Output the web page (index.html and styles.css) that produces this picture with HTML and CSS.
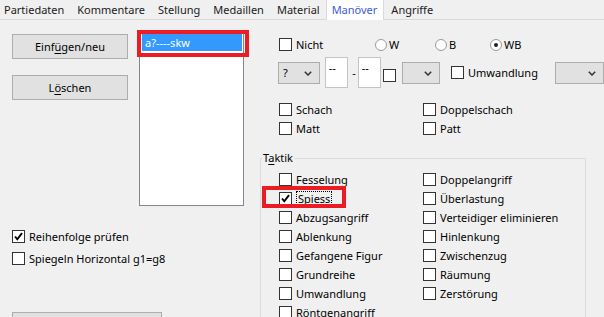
FILE: index.html
```html
<!DOCTYPE html>
<html lang="de">
<head>
    <meta charset="UTF-8">
    <title>Manöver</title>
    <link rel="stylesheet" href="styles.css">
</head>
<body>
    <!-- Tab strip -->
    <div class="tabs">
        <span class="tab first">Partiedaten</span>
        <span class="tab">Kommentare</span>
        <span class="tab">Stellung</span>
        <span class="tab">Medaillen</span>
        <span class="tab">Material</span>
        <span class="tab active">Manöver</span>
        <span class="tab">Angriffe</span>
    </div>

    <div class="page">
        <!-- Left side: buttons, list, options -->
        <div class="left">
            <div class="top">
                <div class="buttons">
                    <button class="btn">Einf<u>ü</u>gen/neu</button>
                    <button class="btn">L<u>ö</u>schen</button>
                </div>
                <div class="list">
                    <div class="item">a?----skw</div>
                    <div class="mark list-mark"></div>
                </div>
            </div>

            <div class="options">
                <label class="check"><span class="box"><svg viewBox="0 0 11 11"><polyline points="2,5.5 4.3,8.3 9,2.2"/></svg></span>Reihenfolge prüfen</label>
                <label class="check"><span class="box"></span>Spiegeln Horizontal g1=g8</label>
            </div>

            <button class="btn wide"></button>
        </div>

        <!-- Right side: filter controls and tactics -->
        <div class="right">
            <div class="row1">
                <label class="check nicht"><span class="box"></span>Nicht</label>
                <label class="radio w"><span class="dot"></span>W</label>
                <label class="radio b"><span class="dot"></span>B</label>
                <label class="radio"><span class="dot on"></span>WB</label>
            </div>

            <div class="row2">
                <div class="combo q">?<svg class="chev" viewBox="0 0 8 5"><polyline points="0.8,0.8 4,4 7.2,0.8"/></svg></div>
                <div class="field">--</div>
                <span class="dash">-</span>
                <div class="field">--</div>
                <span class="box small"></span>
                <div class="combo e"><svg class="chev" viewBox="0 0 8 5"><polyline points="0.8,0.8 4,4 7.2,0.8"/></svg></div>
                <label class="check umw"><span class="box"></span>Umwandlung</label>
                <div class="combo last"><svg class="chev" viewBox="0 0 8 5"><polyline points="0.8,0.8 4,4 7.2,0.8"/></svg></div>
            </div>

            <div class="flags">
                <label class="check"><span class="box"></span>Schach</label>
                <label class="check"><span class="box"></span>Doppelschach</label>
                <label class="check"><span class="box"></span>Matt</label>
                <label class="check"><span class="box"></span>Patt</label>
            </div>

            <fieldset class="group">
                <legend>T<u>a</u>ktik</legend>
                <div class="tactics">
                    <label class="check"><span class="box"></span>Fesselung</label>
                    <label class="check"><span class="box"></span>Doppelangriff</label>
                    <label class="check spiess"><span class="box"><svg viewBox="0 0 11 11"><polyline points="2,5.5 4.3,8.3 9,2.2"/></svg></span><span class="focus">Spiess</span><span class="mark spiess-mark"></span></label>
                    <label class="check"><span class="box"></span>Überlastung</label>
                    <label class="check"><span class="box"></span>Abzugsangriff</label>
                    <label class="check"><span class="box"></span>Verteidiger eliminieren</label>
                    <label class="check"><span class="box"></span>Ablenkung</label>
                    <label class="check"><span class="box"></span>Hinlenkung</label>
                    <label class="check"><span class="box"></span>Gefangene Figur</label>
                    <label class="check"><span class="box"></span>Zwischenzug</label>
                    <label class="check"><span class="box"></span>Grundreihe</label>
                    <label class="check"><span class="box"></span>Räumung</label>
                    <label class="check"><span class="box"></span>Umwandlung</label>
                    <label class="check"><span class="box"></span>Zerstörung</label>
                    <label class="check"><span class="box"></span>Röntgenangriff</label>
                </div>
            </fieldset>
        </div>
    </div>
</body>
</html>
```

FILE: styles.css
```css
/* General Reset */
* {
    box-sizing: border-box;
    margin: 0;
    padding: 0;
}
html, body {
    overflow: hidden;
}
body {
    width: 604px;
    height: 317px;
    background: #f0f0f0;
    color: #000;
    font-family: "Noto Sans", "Liberation Sans", sans-serif;
    font-size: 11px;
}
u {
    text-decoration-thickness: 1px;
    text-underline-offset: 2px;
}

/* Tab strip */
.tabs {
    display: flex;
    height: 20px;
    border-bottom: 1px solid #dadada;
}
.tab {
    padding: 0 6px 0 7px;
    line-height: 19px;
    color: #1a1a1a;
}
.tab.first {
    padding-left: 4px;
}
.tab.active {
    height: 20px;
    padding: 0 6px 0 5px;
    background: #fff;
    border-left: 1px solid #dadada;
    border-right: 1px solid #dadada;
    color: #3c5cd8;
}

/* Page layout */
.page {
    display: flex;
}
.left {
    width: 260px;
    display: flex;
    flex-direction: column;
}
.right {
    width: 344px;
    padding-top: 18px;
}

/* Buttons */
.btn {
    height: 25px;
    width: 116px;
    background: #e1e1e1;
    border: 1px solid #adadad;
    font-family: inherit;
    font-size: 11px;
    color: #000;
}
.top {
    display: flex;
    align-items: flex-start;
}
.buttons {
    display: flex;
    flex-direction: column;
    gap: 16px;
    margin: 14px 0 0 12px;
}
.btn.wide {
    width: 150px;
    margin: 47px 0 0 12px;
}

/* List box */
.list {
    position: relative;
    width: 105px;
    height: 174px;
    margin: 12px 0 0 11px;
    padding: 1px;
    background: #fff;
    border: 1px solid #828790;
}
.item {
    height: 17px;
    margin-left: 1px;
    padding-left: 3px;
    line-height: 17px;
    background: #3399ff;
    color: #fff;
}

/* Red annotation frames */
.mark {
    position: absolute;
    border: 4px solid #ec1c24;
}
.list-mark {
    left: -3px;
    top: -3px;
    width: 112px;
    height: 27px;
}
.spiess-mark {
    left: -17px;
    top: -3px;
    width: 84px;
    height: 22px;
}

/* Checkboxes and radios */
.check {
    display: flex;
    align-items: center;
    height: 13px;
    white-space: nowrap;
}
.box {
    flex: none;
    width: 13px;
    height: 13px;
    margin-right: 4px;
    background: #fff;
    border: 1px solid #333;
}
.box svg {
    display: block;
    width: 11px;
    height: 11px;
    fill: none;
    stroke: #000;
    stroke-width: 1.9;
}
.radio {
    display: flex;
    align-items: center;
    height: 13px;
}
.dot {
    width: 12px;
    height: 12px;
    margin-right: 2px;
    border: 1px solid #9a9a9a;
    border-radius: 50%;
    background: #fff;
    display: flex;
    align-items: center;
    justify-content: center;
}
.dot.on::after {
    content: "";
    width: 4px;
    height: 4px;
    border-radius: 50%;
    background: #222;
}

.options {
    display: flex;
    flex-direction: column;
    gap: 9px;
    margin-top: 24px;
    padding-left: 12px;
}

/* Row 1 */
.row1 {
    display: flex;
    padding-left: 19px;
}
.nicht { width: 96px; }
.radio.w { width: 60px; }
.radio.b { width: 55px; }

/* Row 2 */
.row2 {
    display: flex;
    align-items: center;
    height: 31px;
    margin-top: 6px;
    padding-left: 18px;
}
.combo {
    position: relative;
    height: 22px;
    padding-left: 4px;
    line-height: 20px;
    background: #e1e1e1;
    border: 1px solid #adadad;
}
.chev {
    position: absolute;
    right: 7px;
    top: 8px;
    width: 8px;
    height: 5px;
    fill: none;
    stroke: #333;
    stroke-width: 1.5;
}
.combo.q { width: 43px; }
.combo.e { width: 39px; margin-left: 6px; }
.combo.last { width: 50px; }
.field {
    align-self: stretch;
    width: 24px;
    margin-left: 5px;
    padding: 2px 0 0 3px;
    background: #fff;
    border: 1px solid #c4c4c4;
}
.dash {
    margin: 0 2px 0 4px;
}
.dash + .field {
    margin-left: 0;
}
.box.small {
    margin: 6px 0 0 2px;
}
.umw {
    width: 108px;
    margin-left: 11px;
}

/* Schach / Matt */
.flags {
    display: grid;
    grid-template-columns: 144px auto;
    grid-auto-rows: 19px;
    margin-top: 12px;
    padding-left: 19px;
}
.flags .check,
.tactics .check {
    height: 19px;
}

/* Taktik group box */
.group {
    width: 326px;
    margin-top: 12px;
    padding: 0;
    border: 1px solid #dcdcdc;
}
.group legend {
    margin-left: 1px;
    padding: 0 1px;
    line-height: 16px;
}
.tactics {
    display: grid;
    grid-template-columns: 144px auto;
    grid-auto-rows: 19px;
    padding: 4px 0 0 18px;
}
.spiess {
    position: relative;
}
.focus {
    padding: 0 1px;
    line-height: 14px;
    border: 1px dotted #000;
}
```
